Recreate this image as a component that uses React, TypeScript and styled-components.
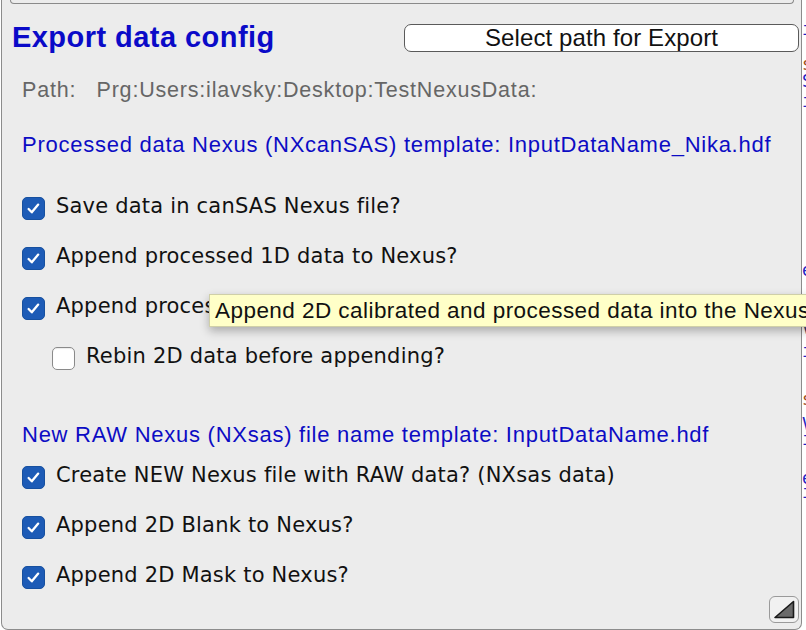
import React from "react";
import styled, { createGlobalStyle } from "styled-components";

const Global = createGlobalStyle`
  html, body { margin: 0; padding: 0; background: #ffffff; }
  body { width: 806px; height: 630px; overflow: hidden; }
`;

const Screen = styled.div`
  display: flex;
  width: 806px;
  height: 630px;
  overflow: hidden;
  background: #ffffff;
`;

const Panel = styled.div`
  position: relative;
  z-index: 1;
  flex: none;
  box-sizing: border-box;
  margin-left: 1px;
  width: 801px;
  height: 630px;
  background: #ececec;
  border-left: 1px solid #8c8c8c;
  border-right: 1px solid #8c8c8c;
  border-bottom: 1px solid #8c8c8c;
  border-radius: 0 0 7px 7px;
  display: flex;
  flex-direction: column;
`;

const TopStub = styled.div`
  box-sizing: border-box;
  height: 4px;
  margin: 0 7px 0 8px;
  border: 1px solid #8a8a8a;
  border-top: none;
  border-radius: 0 0 6px 6px;
`;

const Header = styled.div`
  display: flex;
  align-items: center;
  justify-content: space-between;
  height: 34px;
  margin-top: 16px;
  padding: 0 2px 0 10px;
`;

const Title = styled.h1`
  margin: 0;
  font-family: "Liberation Sans", Arial, sans-serif;
  font-weight: bold;
  font-size: 29px;
  letter-spacing: 0.45px;
  line-height: 34px;
  color: #0a0ac8;
`;

const PathButton = styled.button`
  box-sizing: border-box;
  width: 395px;
  height: 28px;
  margin-top: 2px;
  padding: 0;
  background: #ffffff;
  border: 1.3px solid #5a5a5a;
  border-radius: 7px;
  font-family: "Liberation Sans", Arial, sans-serif;
  font-size: 24px;
  letter-spacing: 0.1px;
  color: #111111;
  line-height: 26px;
`;

const PathLine = styled.div`
  margin-top: 23px;
  padding-left: 20px;
  height: 26px;
  line-height: 26px;
  font-family: "Liberation Sans", Arial, sans-serif;
  font-size: 21.5px;
  letter-spacing: 0.8px;
  color: #666666;
  white-space: pre;
`;

const SectionHead = styled.div<{ $mt: number }>`
  margin-top: ${(p) => p.$mt}px;
  padding-left: 20px;
  height: 26px;
  line-height: 26px;
  font-family: "Liberation Sans", Arial, sans-serif;
  font-size: 22px;
  letter-spacing: 0.74px;
  color: #0c0cc4;
  white-space: nowrap;
`;

const CheckList = styled.div<{ $mt: number }>`
  display: flex;
  flex-direction: column;
  margin-top: ${(p) => p.$mt}px;
`;

const Row = styled.label<{ $indent?: boolean }>`
  display: flex;
  align-items: center;
  gap: 11px;
  height: 50px;
  padding-left: ${(p) => (p.$indent ? 50 : 20)}px;
  font-family: "DejaVu Sans", "Liberation Sans", sans-serif;
  font-size: 21px;
  letter-spacing: 0.2px;
  color: #111111;
  white-space: nowrap;
`;

const Box = styled.span<{ $on: boolean }>`
  box-sizing: border-box;
  flex: none;
  display: flex;
  align-items: center;
  justify-content: center;
  width: 23px;
  height: 23px;
  border-radius: 5px;
  background: ${(p) => (p.$on ? "#1d5bb6" : "#ffffff")};
  border: 1px solid ${(p) => (p.$on ? "#17509f" : "#8a8a8a")};
  box-shadow: ${(p) => (p.$on ? "none" : "inset 0 1px 1px rgba(0,0,0,0.08)")};
`;

const Label = styled.span`
  margin-top: -4px;
`;

const Tooltip = styled.div`
  position: absolute;
  z-index: 3;
  left: 207px;
  top: 294px;
  box-sizing: border-box;
  height: 33px;
  width: 680px;
  padding-left: 5px;
  background: #ffffc8;
  border: 1px solid #cfcfa8;
  box-shadow: 0 4px 9px rgba(0, 0, 0, 0.28);
  font-family: "Liberation Sans", Arial, sans-serif;
  font-size: 22.5px;
  letter-spacing: 0.45px;
  line-height: 31px;
  color: #111111;
  white-space: nowrap;
`;

const Grip = styled.div`
  position: absolute;
  right: 2px;
  bottom: 6px;
  box-sizing: border-box;
  width: 30px;
  height: 27px;
  border: 1.5px solid #9a9a9a;
  border-radius: 6px;
  background: #f1f1f1;
  display: flex;
  align-items: center;
  justify-content: center;
`;

const Behind = styled.div`
  flex: 1;
  display: flex;
  flex-direction: column;
  overflow: hidden;
  font-family: "DejaVu Sans Mono", monospace;
  font-size: 17px;
  line-height: 14px;
`;

const Frag = styled.span<{ $top: number; $color: string }>`
  display: block;
  margin-top: ${(p) => p.$top}px;
  margin-left: 0px;
  color: ${(p) => p.$color};
  white-space: nowrap;
`;

const Check = () => (
  <svg width="15" height="15" viewBox="0 0 15 15">
    <path
      d="M2.6 8 L5.8 11.3 L12.2 3.6"
      fill="none"
      stroke="#ffffff"
      strokeWidth="2.3"
      strokeLinecap="round"
      strokeLinejoin="round"
    />
  </svg>
);

const CheckRow = ({ on, text, indent }: { on: boolean; text: string; indent?: boolean }) => (
  <Row $indent={indent}>
    <Box $on={on}>{on && <Check />}</Box>
    <Label>{text}</Label>
  </Row>
);

const BLUE = "#2323c4";
const BROWN = "#a0501e";
const DARK = "#333366";

const frags: { top: number; color: string; t: string }[] = [
  { top: 22, color: BLUE, t: "i" },
  { top: 21, color: BROWN, t: "s" },
  { top: 3, color: BLUE, t: "S" },
  { top: 6, color: BLUE, t: "i" },
  { top: 155, color: BLUE, t: "e" },
  { top: 44, color: DARK, t: "V" },
  { top: 9, color: BLUE, t: "i" },
  { top: 34, color: BROWN, t: "s" },
  { top: 11, color: BLUE, t: "V" },
  { top: 1, color: BLUE, t: "i" },
  { top: 25, color: BLUE, t: "e" },
  { top: 0, color: BLUE, t: "i" },
];

export default function App() {
  return (
    <Screen>
      <Global />
      <Panel>
        <TopStub />
        <Header>
          <Title>Export data config</Title>
          <PathButton>Select path for Export</PathButton>
        </Header>
        <PathLine>{"Path:   Prg:Users:ilavsky:Desktop:TestNexusData:"}</PathLine>
        <SectionHead $mt={29}>
          Processed data Nexus (NXcanSAS) template: InputDataName_Nika.hdf
        </SectionHead>
        <CheckList $mt={25}>
          <CheckRow on text="Save data in canSAS Nexus file?" />
          <CheckRow on text="Append processed 1D data to Nexus?" />
          <CheckRow on text="Append processed 2D data to Nexus?" />
          <CheckRow on={false} indent text="Rebin 2D data before appending?" />
        </CheckList>
        <SectionHead $mt={39}>
          New RAW Nexus (NXsas) file name template: InputDataName.hdf
        </SectionHead>
        <CheckList $mt={4}>
          <CheckRow on text="Create NEW Nexus file with RAW data? (NXsas data)" />
          <CheckRow on text="Append 2D Blank to Nexus?" />
          <CheckRow on text="Append 2D Mask to Nexus?" />
        </CheckList>
        <Tooltip>Append 2D calibrated and processed data into the Nexus file</Tooltip>
        <Grip>
          <svg width="22" height="19" viewBox="0 0 22 19">
            <path d="M2 17.5 L20.5 1.5 L20.5 17.5 Z" fill="#6a6a6a" stroke="#1a1a1a" strokeWidth="1.6" strokeLinejoin="round" />
          </svg>
        </Grip>
      </Panel>
      <Behind>
        {frags.map((f, i) => (
          <Frag key={i} $top={f.top} $color={f.color}>
            {f.t}
          </Frag>
        ))}
      </Behind>
    </Screen>
  );
}
